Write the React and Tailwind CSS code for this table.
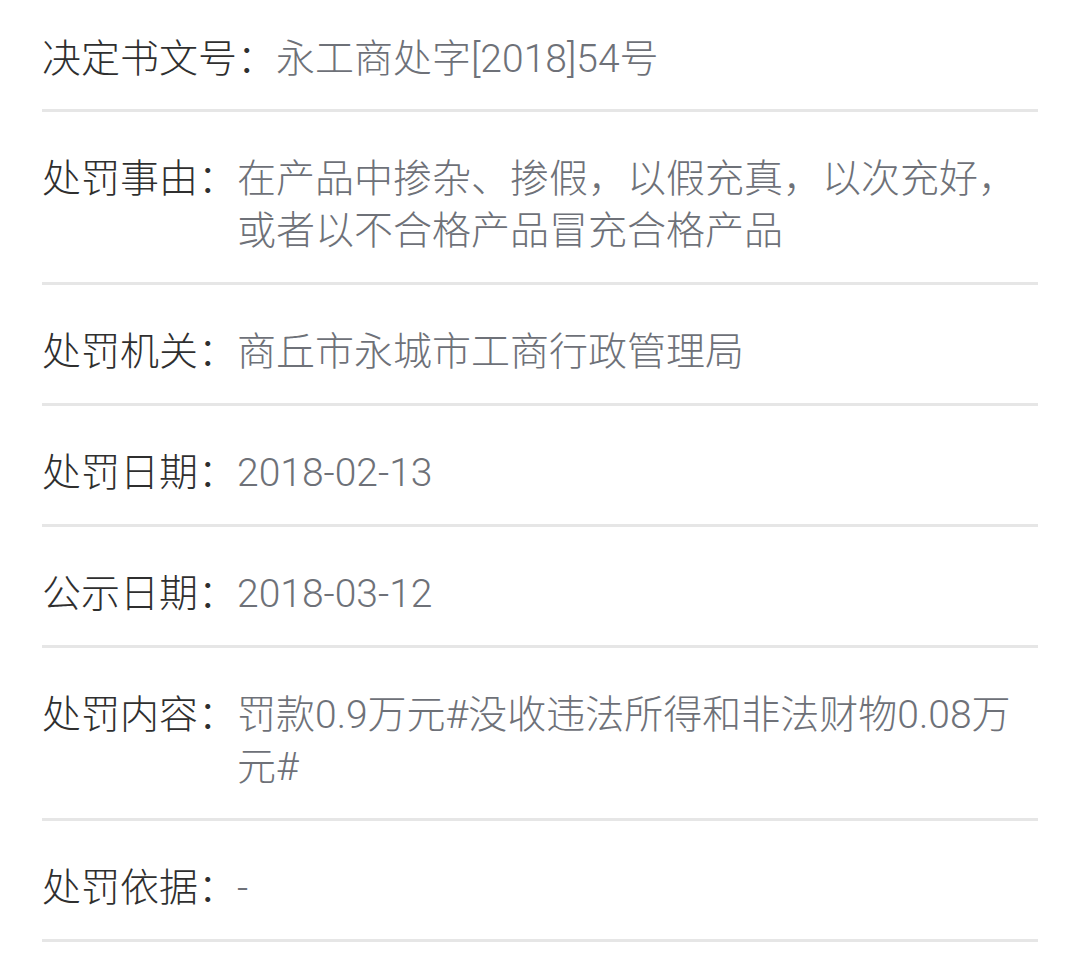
import React from 'react';

const rows = [
  { label: '决定书文号：', value: '永工商处字[2018]54号' },
  { label: '处罚事由：', value: '在产品中掺杂、掺假，以假充真，以次充好，或者以不合格产品冒充合格产品' },
  { label: '处罚机关：', value: '商丘市永城市工商行政管理局' },
  { label: '处罚日期：', value: '2018-02-13' },
  { label: '公示日期：', value: '2018-03-12' },
  { label: '处罚内容：', value: '罚款0.9万元#没收违法所得和非法财物0.08万元#' },
  { label: '处罚依据：', value: '-' },
];

const App = () => {
  return (
    <div
      className="min-h-screen bg-white px-[42px]"
      style={{ fontFamily: 'Roboto, "Noto Sans CJK SC", sans-serif' }}
    >
      {rows.map((row, i) => (
        <div
          key={row.label}
          className={`flex border-b-[3px] border-[#e6e6e6] text-[39px] font-light leading-[52px] ${
            i === 0 ? 'pt-[33px] pb-[24px]' : 'pt-[41px] pb-[25px]'
          }`}
        >
          <span className="shrink-0 text-[#2f2f2f]">{row.label}</span>
          <span className="flex-1 text-[#6e7178]">{row.value}</span>
        </div>
      ))}
    </div>
  );
};

export default App;
